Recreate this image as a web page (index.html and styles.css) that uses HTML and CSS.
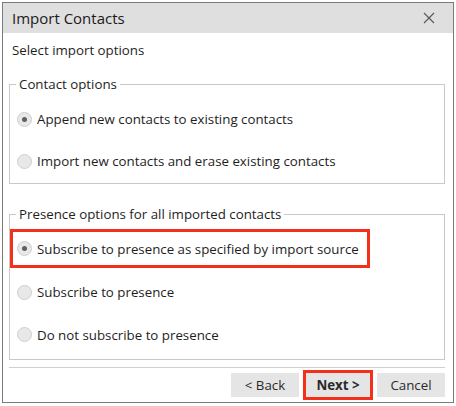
FILE: index.html
```html
<!DOCTYPE html>
<html>
<head>
<meta charset="utf-8">
<link rel="stylesheet" href="styles.css">
</head>
<body>
<div class="dialog">
  <div class="titlebar">
    <span class="title">Import Contacts</span>
    <svg class="close" width="12" height="12" viewBox="0 0 12 12"><path d="M1 1L11 11M11 1L1 11" stroke="#555" stroke-width="1.1" fill="none"/></svg>
  </div>
  <div class="subtitle">Select import options</div>
  <fieldset class="group group-contact">
    <legend>Contact options</legend>
    <div class="option"><span class="radio checked"></span><span>Append new contacts to existing contacts</span></div>
    <div class="option"><span class="radio"></span><span>Import new contacts and erase existing contacts</span></div>
  </fieldset>
  <fieldset class="group group-presence">
    <legend>Presence options for all imported contacts</legend>
    <div class="option highlight"><span class="radio checked"></span><span>Subscribe to presence as specified by import source</span></div>
    <div class="option"><span class="radio"></span><span>Subscribe to presence</span></div>
    <div class="option"><span class="radio"></span><span>Do not subscribe to presence</span></div>
  </fieldset>
  <div class="separator"></div>
  <div class="buttons">
    <button class="btn">&lt; Back</button>
    <button class="btn primary">Next &gt;</button>
    <button class="btn">Cancel</button>
  </div>
</div>
</body>
</html>
```
FILE: styles.css
```css
* { box-sizing: border-box; }
html, body { margin: 0; padding: 0; background: #fff; }
body {
  font-family: "Open Sans", "Noto Sans", "Liberation Sans", sans-serif;
  font-size: 13.3px;
  color: #1e1e1e;
}
.dialog {
  margin: 2px 0 0 2px;
  width: 452px;
  height: 401px;
  border: 1px solid #7a7a7a;
  display: flex;
  flex-direction: column;
}
.titlebar {
  height: 30px;
  background: #dfdfdf;
  display: flex;
  align-items: center;
  justify-content: space-between;
  padding: 0 18px 0 9px;
}
.title { font-size: 15px; color: #1a1a1a; }
.close { display: block; }
.subtitle { padding: 8px 0 0 9px; height: 42px; }
.group {
  margin: 0 8px 0 6px;
  border: 1px solid #c9c9c9;
  padding: 0 0 0 7px;
}
.group legend { padding: 0 3px; margin-left: -1px; }
.group-contact { height: 109px; padding-top: 5px; }
.group-presence { margin-top: 21px; height: 155px; padding-top: 6px; }
.option {
  display: flex;
  align-items: center;
  gap: 5px;
  height: 42px;
}
.group-presence .option { height: 42.5px; }
.highlight {
  margin-left: -7px;
  width: 360px;
  padding-left: 4px;
  height: 39px !important;
  border: 3px solid #f5301a;
  margin-bottom: 3px;
}
.radio {
  width: 15px; height: 15px;
  border-radius: 50%;
  border: 1px solid #cfcfcf;
  background: #e8e8e8;
  display: flex; align-items: center; justify-content: center;
  flex: none;
}
.radio.checked::after {
  content: "";
  width: 5px; height: 5px;
  border-radius: 50%;
  background: #606060;
}
.separator {
  margin: 7px 8px 0 6px;
  height: 1px;
  background: #cfcfcf;
}
.buttons {
  display: flex;
  justify-content: flex-end;
  align-items: center;
  gap: 4px;
  padding: 2px 8px 0 0;
}
.btn {
  font-family: inherit;
  font-size: 13.3px;
  color: #2a2a2a;
  background: #e5e5e5;
  border: none;
  height: 24px;
  width: 68px;
  padding: 0;
}
.primary {
  font-weight: bold;
  height: 30px;
  width: 70px;
  border: 3px solid #f5301a;
  background: #e5e5e5;
}
```
